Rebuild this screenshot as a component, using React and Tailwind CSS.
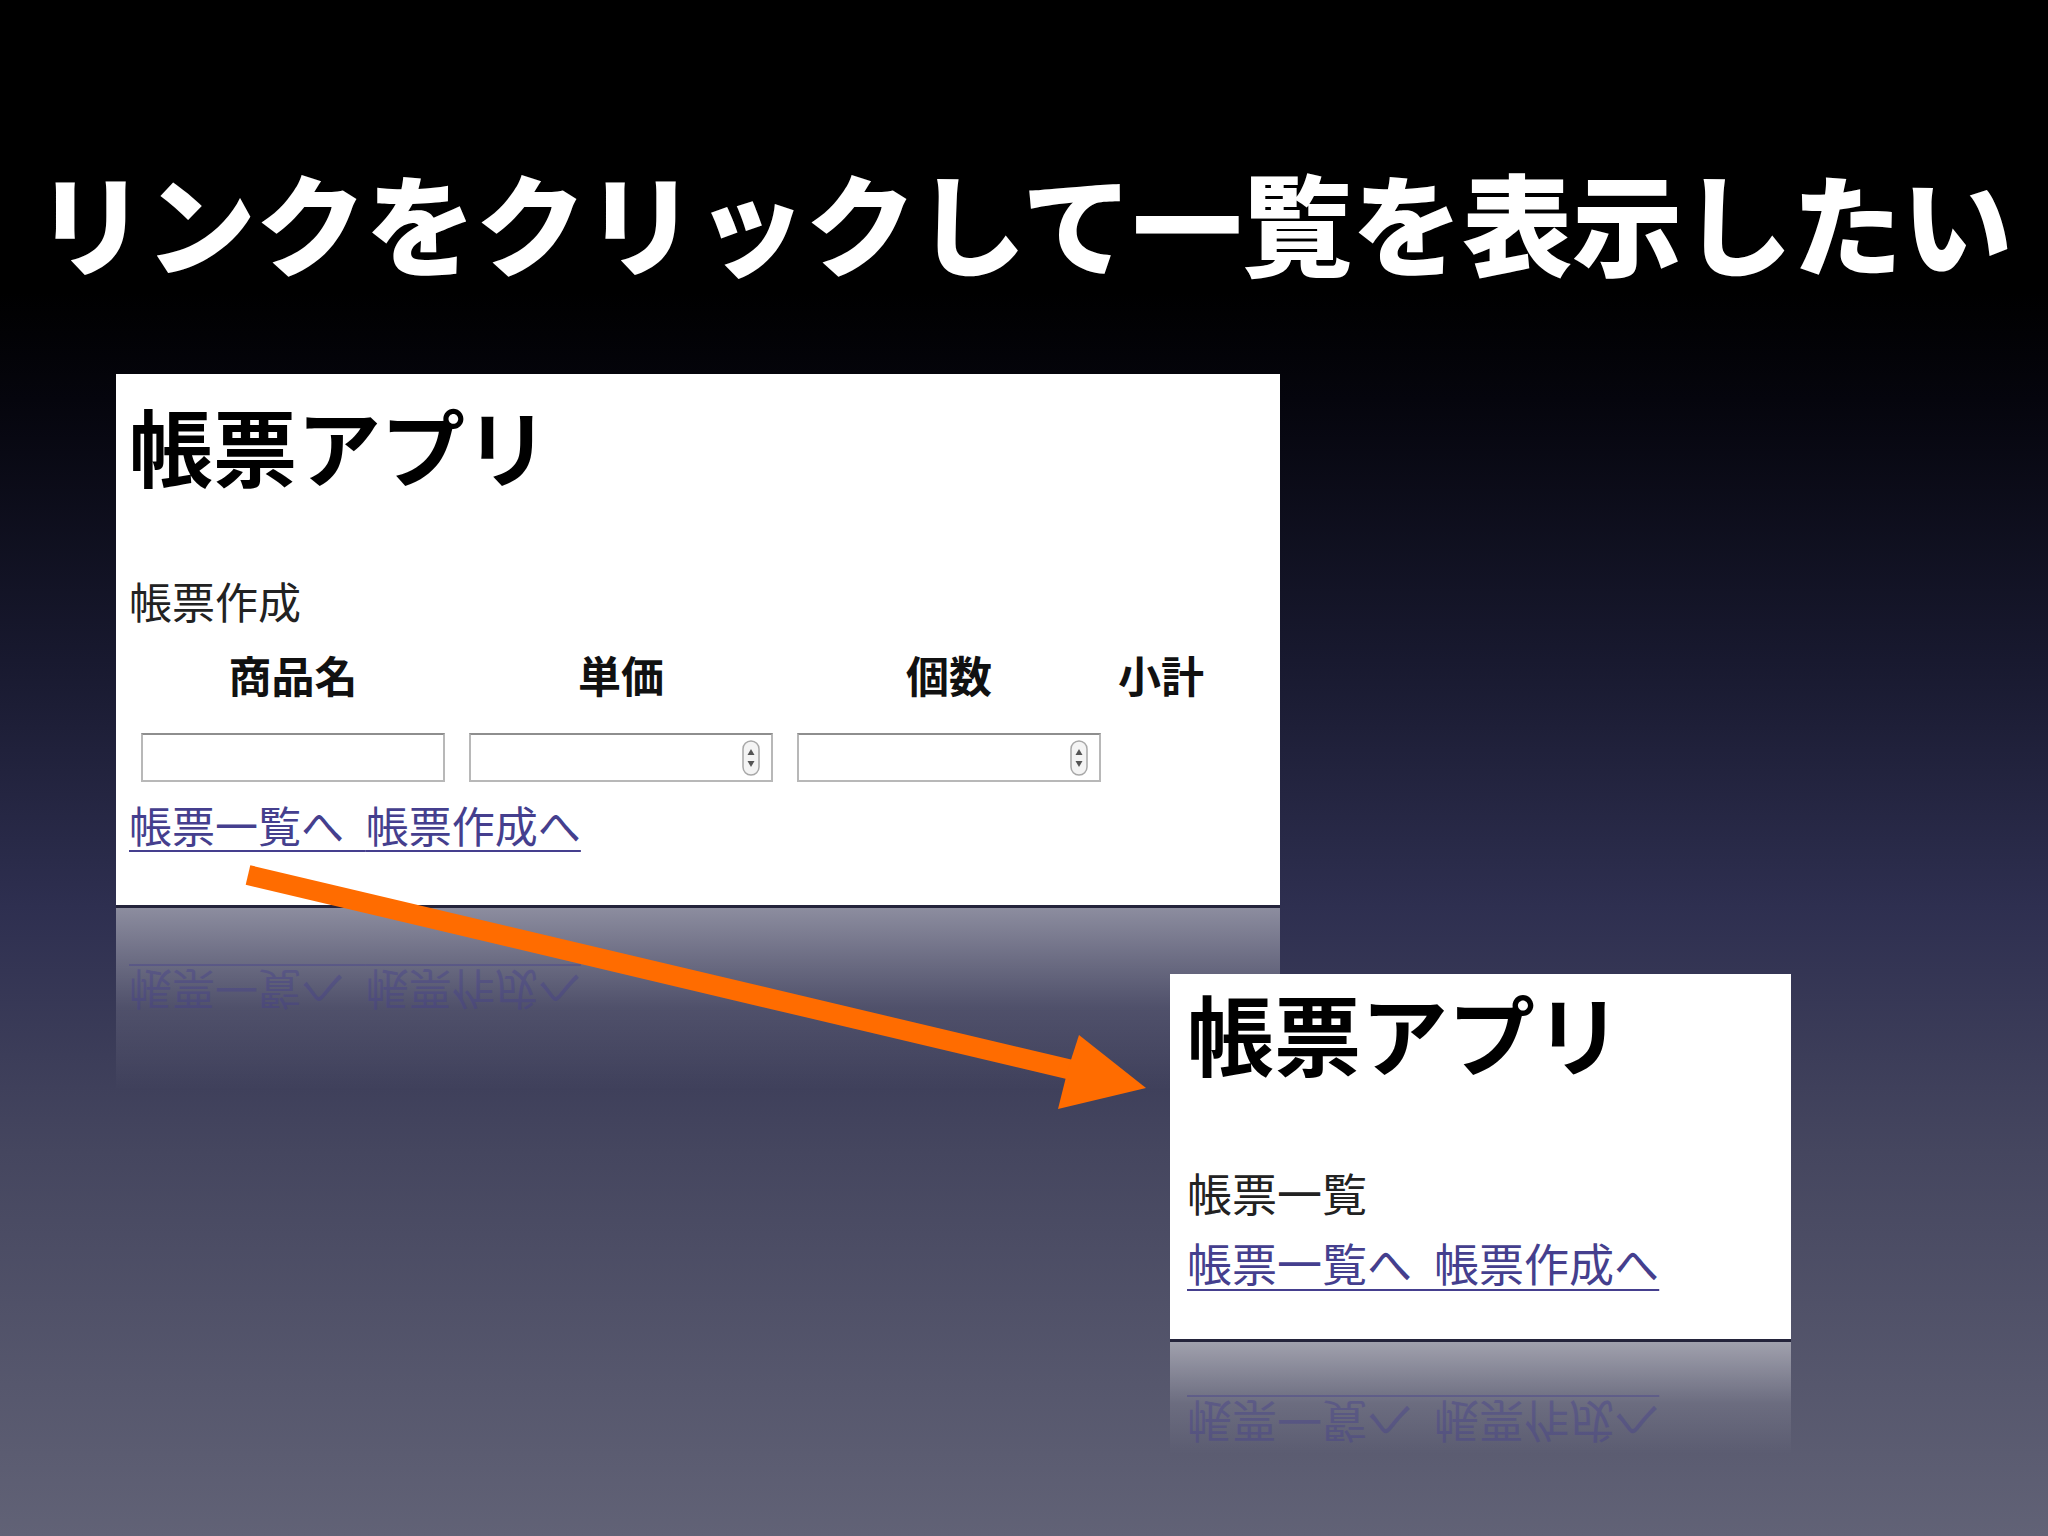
import React from 'react';

const JP = { fontFamily: '"Noto Sans CJK JP", "Noto Sans", sans-serif' };

function Spinner() {
  return (
    <svg width="18" height="36" viewBox="0 0 18 36">
      <rect x="1" y="1" width="16" height="34" rx="8" fill="#f4f4f4" stroke="#a8a8a8" strokeWidth="1.5" />
      <path d="M9 9 L12.5 15 L5.5 15 Z" fill="#555" />
      <path d="M9 27 L12.5 21 L5.5 21 Z" fill="#555" />
    </svg>
  );
}

function FakeInput({ spinner }) {
  return (
    <div className="h-[49px] border-2 border-[#b8b8b8] border-t-[#8e8e8e] bg-white flex items-center justify-end pr-[11px]">
      {spinner && <Spinner />}
    </div>
  );
}

function Links({ size, lh }) {
  return (
    <div className={`${size} ${lh} text-[#453f8e] whitespace-nowrap`}>
      <span className="underline decoration-2 underline-offset-[7px] [word-spacing:12px]">
        <a>帳票一覧へ</a> <a>帳票作成へ</a>
      </span>
    </div>
  );
}

function Reflection({ height, padTop, padLeft, size, lh }) {
  return (
    <div
      className={`absolute left-0 top-full w-full ${height} border-t-[3px] border-[#24243b] bg-[linear-gradient(to_bottom,rgba(255,255,255,0.45),rgba(255,255,255,0.12)_55%,rgba(255,255,255,0))]`}
    >
      <div className={`${padTop} ${padLeft}`}>
        <div className="opacity-40 [transform:scaleY(-1)]">
          <Links size={size} lh={lh} />
        </div>
      </div>
    </div>
  );
}

export default function App() {
  return (
    <div
      className="relative w-[2048px] h-[1536px] overflow-hidden bg-[linear-gradient(to_bottom,#000_0%,#000_19%,#05050d_26%,#18192f_43%,#2e2f50_59%,#45465f_75%,#616276_100%)]"
      style={JP}
    >
      {/* Title */}
      <div className="pt-[155px] text-center text-white text-[110px] font-black leading-[130px] whitespace-nowrap">
        リンクをクリックして一覧を表示したい
      </div>

      {/* Panel 1: 帳票作成 */}
      <div className="relative ml-[116px] mt-[89px] w-[1164px] h-[531px] bg-white">
        <div className="pl-[13px] pt-[21px] flex flex-col text-[#111]">
          <h1 className="text-[84px] font-bold leading-[100px] text-black">帳票アプリ</h1>
          <p className="mt-[80px] text-[43px] leading-[50px] text-[#222]">帳票作成</p>
          <div className="ml-[12px] mt-[24px] grid grid-cols-[304px_304px_304px_72px] gap-x-6 text-[43px] leading-[50px] font-bold">
            <div className="flex justify-center whitespace-nowrap">商品名</div>
            <div className="flex justify-center whitespace-nowrap">単価</div>
            <div className="flex justify-center whitespace-nowrap">個数</div>
            <div className="flex justify-center whitespace-nowrap">小計</div>
          </div>
          <div className="ml-[12px] mt-[34px] grid grid-cols-[304px_304px_304px] gap-x-6">
            <FakeInput />
            <FakeInput spinner />
            <FakeInput spinner />
          </div>
          <div className="mt-[17px]">
            <Links size="text-[43px]" lh="leading-[50px]" />
          </div>
        </div>
        <Reflection height="h-[185px]" padTop="pt-[59px]" padLeft="pl-[13px]" size="text-[43px]" lh="leading-[50px]" />
      </div>

      {/* Panel 2: 帳票一覧 */}
      <div className="relative ml-[1170px] mt-[69px] w-[621px] h-[365px] bg-white">
        <div className="pl-[17px] pt-[6px] flex flex-col">
          <h1 className="text-[87px] font-bold leading-[104px] text-black">帳票アプリ</h1>
          <p className="mt-[83px] text-[45px] leading-[52px] text-[#222]">帳票一覧</p>
          <div className="mt-[18px]">
            <Links size="text-[45px]" lh="leading-[52px]" />
          </div>
        </div>
        <Reflection height="h-[115px]" padTop="pt-[55px]" padLeft="pl-[17px]" size="text-[45px]" lh="leading-[52px]" />
      </div>

      {/* Arrow */}
      <svg className="absolute inset-0 pointer-events-none" width="2048" height="1536" viewBox="0 0 2048 1536">
        <line x1="248" y1="875" x2="1072" y2="1070" stroke="#ff6c00" strokeWidth="20" />
        <polygon points="1146,1088 1079,1035 1068,1069 1058,1109" fill="#ff6c00" />
      </svg>
    </div>
  );
}
